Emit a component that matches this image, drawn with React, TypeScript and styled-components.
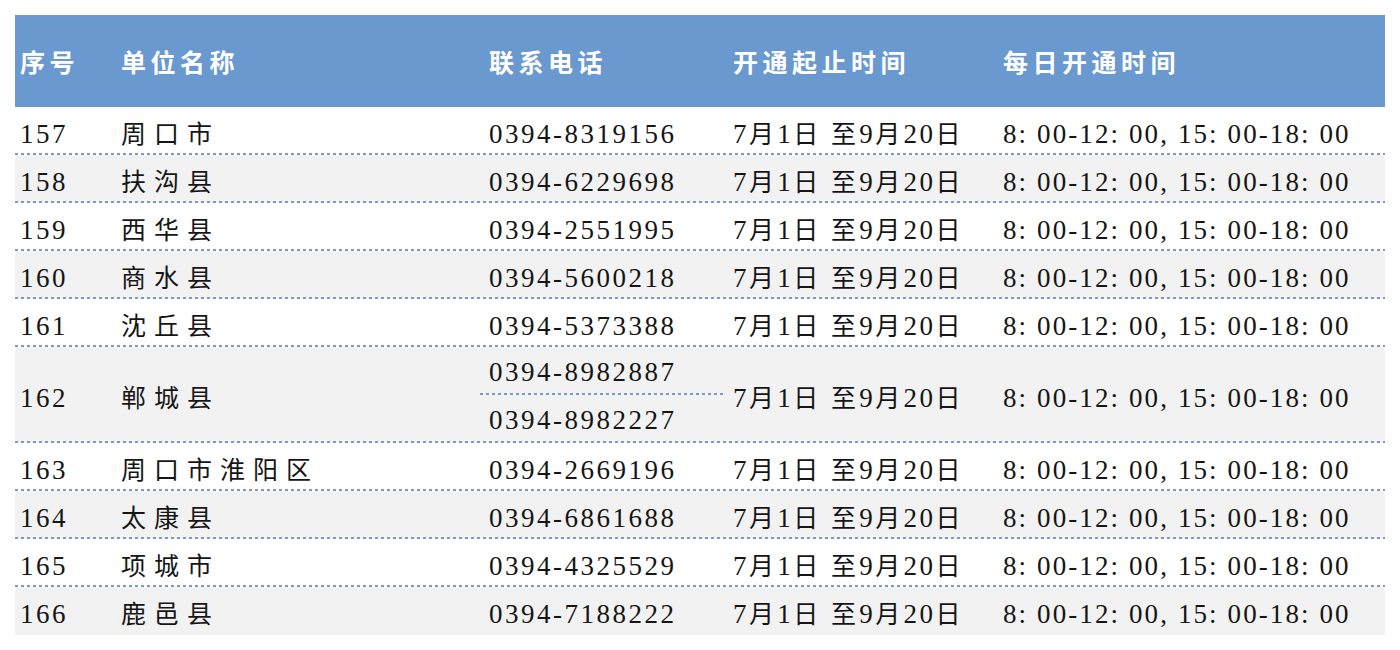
import styled, { createGlobalStyle } from 'styled-components'

const GlobalStyle = createGlobalStyle`
  html, body {
    margin: 0;
    padding: 0;
    background: #ffffff;
  }
`

const Page = styled.div`
  padding: 15px;
  width: 1370px;
`

const Table = styled.div`
  display: flex;
  flex-direction: column;
`

const cols = '100px 365px 243px 272px 1fr'

const HeadRow = styled.div`
  display: grid;
  grid-template-columns: ${cols};
  height: 92px;
  align-items: center;
  background: #6a99cf;
  color: #ffffff;
  font-family: "Noto Sans CJK SC", "Noto Sans", sans-serif;
  font-weight: 700;
  font-size: 25px;
  letter-spacing: 4.5px;
`

const HeadCell = styled.div<{ $pad: number }>`
  padding-left: ${(p) => p.$pad}px;
  white-space: nowrap;
`

const dashes = `repeating-linear-gradient(to right, #7b9bbf 0 3px, transparent 3px 6px)`

const Row = styled.div<{ $shade: boolean; $tall?: boolean; $last?: boolean }>`
  display: grid;
  grid-template-columns: ${cols};
  height: ${(p) => (p.$tall ? 96 : 48)}px;
  align-items: center;
  background-color: ${(p) => (p.$shade ? '#f2f2f2' : '#ffffff')};
  background-image: ${(p) => (p.$last ? 'none' : dashes)};
  background-size: 100% 2px;
  background-position: left bottom;
  background-repeat: no-repeat;
  color: #151515;
  font-family: "Noto Sans CJK SC", serif;
  font-size: 25px;
  letter-spacing: 3.3px;
`

const Cell = styled.div<{ $pad: number; $wide?: boolean }>`
  padding-left: ${(p) => p.$pad}px;
  padding-top: 2px;
  white-space: nowrap;
  letter-spacing: ${(p) => (p.$wide ? '8px' : 'inherit')};
`

const Num = styled.span<{ $tight?: boolean }>`
  font-family: "Liberation Serif", "Times New Roman", serif;
  font-size: 27px;
  letter-spacing: ${(p) => (p.$tight ? '2.1px' : '2.5px')};
`

const PhoneStack = styled.div`
  display: flex;
  flex-direction: column;
  height: 100%;
`

const PhoneLine = styled.div<{ $split?: boolean }>`
  flex: 1;
  display: flex;
  align-items: center;
  padding-left: 9px;
  padding-top: 2px;
  background-image: ${(p) => (p.$split ? dashes : 'none')};
  background-size: 100% 2px;
  background-position: left bottom;
  background-repeat: no-repeat;
`

// wrap every run of latin characters in a serif span, leave CJK as is
function Mixed({ text }: { text: string }) {
  const parts = text.split(/([0-9:,\- ]+)/).filter(Boolean)
  return (
    <>
      {parts.map((p, i) =>
        /^[0-9:,\- ]+$/.test(p) ? <Num key={i}>{p}</Num> : <span key={i}>{p}</span>
      )}
    </>
  )
}

type Entry = { no: string; name: string; phones: string[] }

const rows: Entry[] = [
  { no: '157', name: '周口市', phones: ['0394-8319156'] },
  { no: '158', name: '扶沟县', phones: ['0394-6229698'] },
  { no: '159', name: '西华县', phones: ['0394-2551995'] },
  { no: '160', name: '商水县', phones: ['0394-5600218'] },
  { no: '161', name: '沈丘县', phones: ['0394-5373388'] },
  { no: '162', name: '郸城县', phones: ['0394-8982887', '0394-8982227'] },
  { no: '163', name: '周口市淮阳区', phones: ['0394-2669196'] },
  { no: '164', name: '太康县', phones: ['0394-6861688'] },
  { no: '165', name: '项城市', phones: ['0394-4325529'] },
  { no: '166', name: '鹿邑县', phones: ['0394-7188222'] },
]

const period = '7月1日 至9月20日'
const hours = '8: 00-12: 00, 15: 00-18: 00'

export default function App() {
  return (
    <Page>
      <GlobalStyle />
      <Table>
        <HeadRow>
          <HeadCell $pad={5}>序号</HeadCell>
          <HeadCell $pad={6}>单位名称</HeadCell>
          <HeadCell $pad={9}>联系电话</HeadCell>
          <HeadCell $pad={10}>开通起止时间</HeadCell>
          <HeadCell $pad={8}>每日开通时间</HeadCell>
        </HeadRow>
        {rows.map((r, i) => (
          <Row
            key={r.no}
            $shade={i % 2 === 1}
            $tall={r.phones.length > 1}
            $last={i === rows.length - 1}
          >
            <Cell $pad={5}><Num>{r.no}</Num></Cell>
            <Cell $pad={6} $wide>{r.name}</Cell>
            {r.phones.length > 1 ? (
              <PhoneStack>
                {r.phones.map((p, j) => (
                  <PhoneLine key={p} $split={j < r.phones.length - 1}>
                    <Num>{p}</Num>
                  </PhoneLine>
                ))}
              </PhoneStack>
            ) : (
              <Cell $pad={9}><Num>{r.phones[0]}</Num></Cell>
            )}
            <Cell $pad={10}><Mixed text={period} /></Cell>
            <Cell $pad={8}><Num $tight>{hours}</Num></Cell>
          </Row>
        ))}
      </Table>
    </Page>
  )
}
